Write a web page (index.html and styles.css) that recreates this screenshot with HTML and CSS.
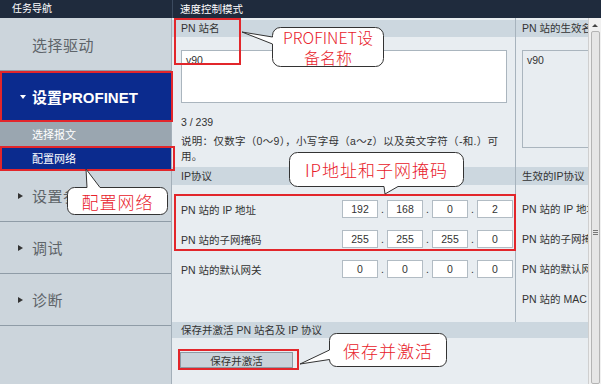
FILE: index.html
```html
<!DOCTYPE html>
<html lang="zh-CN">
<head>
    <meta charset="UTF-8">
    <title>设置PROFINET - 配置网络</title>
    <link rel="stylesheet" href="styles.css">
</head>
<body>
    <div class="topbar">
        <div class="topbar-nav">任务导航</div>
        <div class="topbar-mode">速度控制模式</div>
    </div>
    <div class="workspace">
        <nav class="sidebar">
            <div class="nav-item nav-first">选择驱动</div>
            <div class="nav-item nav-open"><span class="caret-down"></span>设置PROFINET</div>
            <div class="nav-sub">选择报文</div>
            <div class="nav-sub nav-sub-active">配置网络</div>
            <div class="nav-item nav-line"><span class="caret-right"></span>设置参数</div>
            <div class="nav-item nav-line"><span class="caret-right"></span>调试</div>
            <div class="nav-item nav-line"><span class="caret-right"></span>诊断</div>
        </nav>
        <main class="content">
            <div class="panels">
                <section class="panel-edit">
                    <div class="section-head">PN 站名</div>
                    <div class="name-box">v90</div>
                    <div class="count">3 / 239</div>
                    <div class="hint">说明：仅数字（0～9），小写字母（a～z）以及英文字符（-和.）可<br>用。</div>
                    <div class="section-head ip-head">IP协议</div>
                    <div class="ip-rows">
                        <div class="ip-row">
                            <span class="ip-label">PN 站的 IP 地址</span>
                            <div class="ip-fields">
                                <span class="ip-field">192</span><span class="ip-dot">.</span>
                                <span class="ip-field">168</span><span class="ip-dot">.</span>
                                <span class="ip-field">0</span><span class="ip-dot">.</span>
                                <span class="ip-field">2</span>
                            </div>
                        </div>
                        <div class="ip-row">
                            <span class="ip-label">PN 站的子网掩码</span>
                            <div class="ip-fields">
                                <span class="ip-field">255</span><span class="ip-dot">.</span>
                                <span class="ip-field">255</span><span class="ip-dot">.</span>
                                <span class="ip-field">255</span><span class="ip-dot">.</span>
                                <span class="ip-field">0</span>
                            </div>
                        </div>
                        <div class="ip-row">
                            <span class="ip-label">PN 站的默认网关</span>
                            <div class="ip-fields">
                                <span class="ip-field">0</span><span class="ip-dot">.</span>
                                <span class="ip-field">0</span><span class="ip-dot">.</span>
                                <span class="ip-field">0</span><span class="ip-dot">.</span>
                                <span class="ip-field">0</span>
                            </div>
                        </div>
                    </div>
                </section>
                <section class="panel-live">
                    <div class="section-head">PN 站的生效名称</div>
                    <div class="live-name">v90</div>
                    <div class="section-head live-head">生效的IP协议</div>
                    <div class="live-rows">
                        <div class="live-row">PN 站的 IP 地址</div>
                        <div class="live-row">PN 站的子网掩码</div>
                        <div class="live-row">PN 站的默认网关</div>
                        <div class="live-row">PN 站的 MAC 地址</div>
                    </div>
                </section>
            </div>
            <div class="save-head">保存并激活 PN 站名及 IP 协议</div>
            <button class="save-btn" type="button">保存并激活</button>
        </main>
        <div class="scrollbar">
            <div class="sb-arrow"></div>
            <div class="sb-thumb"><span class="sb-grip"></span></div>
        </div>
    </div>

    <svg class="marks" width="601" height="384" viewBox="0 0 601 384">
        <g fill="none" stroke="#e2262b" stroke-width="2">
            <rect x="175" y="19" width="65" height="45"/>
            <rect x="1" y="72" width="171" height="49"/>
            <rect x="1" y="147" width="173" height="23"/>
            <rect x="175" y="195" width="340" height="55"/>
            <rect x="179" y="350" width="119" height="19"/>
        </g>
        <g fill="#fff" stroke="#333" stroke-width="1">
            <path d="M280.5 27.5 H375.5 A8 8 0 0 1 383.5 35.5 V58.5 A8 8 0 0 1 375.5 66.5 H280.5 A8 8 0 0 1 272.5 58.5 V44 L242 32 L272.5 37 V35.5 A8 8 0 0 1 280.5 27.5 Z"/>
            <path d="M74.5 187.5 H87 L86 169 L100 187.5 H160.5 A7 7 0 0 1 167.5 194.5 V207.5 A7 7 0 0 1 160.5 214.5 H74.5 A7 7 0 0 1 67.5 207.5 V194.5 A7 7 0 0 1 74.5 187.5 Z"/>
            <path d="M297.5 152.5 H455.5 A8 8 0 0 1 463.5 160.5 V178.5 A8 8 0 0 1 455.5 186.5 H398 L385 194 L384 186.5 H297.5 A8 8 0 0 1 289.5 178.5 V160.5 A8 8 0 0 1 297.5 152.5 Z"/>
            <path d="M336.5 333.5 H439.5 A7 7 0 0 1 446.5 340.5 V359.5 A7 7 0 0 1 439.5 366.5 H336.5 A7 7 0 0 1 329.5 359.5 L300 364 L329.5 350 V340.5 A7 7 0 0 1 336.5 333.5 Z"/>
        </g>
    </svg>
    <div class="callout callout-name">PROFINET设<br>备名称</div>
    <div class="callout callout-nav">配置网络</div>
    <div class="callout callout-ip">IP地址和子网掩码</div>
    <div class="callout callout-save">保存并激活</div>
</body>
</html>
```

FILE: styles.css
```css
/* Page frame */
body {
    margin: 0;
    width: 601px;
    height: 384px;
    overflow: hidden;
    position: relative;
    font-family: "Liberation Sans", "Noto Sans CJK SC", sans-serif;
    font-size: 10.5px;
    color: #333;
    background: #e8edf1;
}

.topbar {
    display: flex;
    height: 18px;
    background: #1f2b3d;
    color: #fff;
}
.topbar-nav {
    width: 160px;
    padding-left: 12px;
    line-height: 18px;
    font-size: 10px;
}
.topbar-mode {
    flex: 1;
    padding-left: 7px;
    border-left: 1px solid #3b4a5f;
    line-height: 18px;
}

.workspace {
    display: flex;
    height: 366px;
}

/* Task navigation */
.sidebar {
    width: 171px;
    border-right: 1px solid #a3afb9;
    background: #ccd5dc;
}
.nav-item {
    height: 51px;
    display: flex;
    align-items: center;
    padding-left: 18px;
    font-size: 15px;
    letter-spacing: 0.5px;
    color: #5e6469;
}
.nav-first {
    height: 52px;
    padding-left: 32px;
    border-bottom: 1px solid #8f9ca7;
}
.nav-open {
    background: #0b2b8e;
    color: #fff;
    font-weight: bold;
    padding-left: 20px;
    letter-spacing: 0;
}
.nav-line {
    border-bottom: 1px solid #8f9ca7;
}
.nav-sub {
    height: 24px;
    display: flex;
    align-items: center;
    padding-left: 32px;
    font-size: 11px;
    color: #fff;
    background: #9aa6b0;
}
.nav-sub-active {
    background: #0b2b8e;
}
.caret-down {
    width: 0;
    height: 0;
    border-left: 3px solid transparent;
    border-right: 3px solid transparent;
    border-top: 4px solid #fff;
    margin-right: 6px;
}
.caret-right {
    width: 0;
    height: 0;
    border-top: 3.5px solid transparent;
    border-bottom: 3.5px solid transparent;
    border-left: 5px solid #333;
    margin-right: 9px;
}

/* Content */
.content {
    width: 416px;
    display: flex;
    flex-direction: column;
}
.panels {
    display: flex;
    height: 304px;
}
.panel-edit {
    width: 343px;
    border-right: 1px solid #a7b3bd;
    padding-top: 2px;
}
.panel-live {
    width: 72px;
    padding-top: 2px;
    overflow: hidden;
}
.section-head {
    height: 17px;
    line-height: 17px;
    padding-left: 9px;
    background: #ccd7df;
    white-space: nowrap;
}
.name-box {
    margin: 13px 8px 0 9px;
    height: 47px;
    border: 1px solid #aab5be;
    background: #fff;
    padding: 2px 4px;
    line-height: 15px;
}
.count {
    margin: 12px 0 0 9px;
    line-height: 15px;
}
.hint {
    margin: 4px 0 0 9px;
    line-height: 15px;
    white-space: nowrap;
    letter-spacing: 0.3px;
}
.ip-head {
    margin-top: 3px;
    height: 18px;
    line-height: 18px;
}
.ip-rows {
    margin-top: 9px;
}
.ip-row {
    display: flex;
    align-items: center;
    height: 30px;
    padding: 0 2px 0 9px;
}
.ip-label {
    flex: 1;
}
.ip-fields {
    display: flex;
    align-items: center;
}
.ip-field {
    width: 36px;
    height: 18px;
    box-sizing: border-box;
    border: 1px solid #b2bcc4;
    background: #fff;
    text-align: center;
    line-height: 16px;
}
.ip-dot {
    width: 9px;
    text-align: center;
}

.panel-live .section-head {
    padding-left: 6px;
}
.live-name {
    margin: 13px 0 0 6px;
    width: 80px;
    height: 92px;
    border: 1px solid #aab5be;
    padding: 2px 4px;
    line-height: 15px;
}
.live-head {
    margin-top: 19px;
    height: 18px;
    line-height: 18px;
}
.live-rows {
    margin-top: 9px;
}
.live-row {
    height: 30px;
    line-height: 30px;
    padding-left: 6px;
    white-space: nowrap;
}

.save-head {
    height: 16px;
    line-height: 16px;
    padding-left: 9px;
    background: #ccd7df;
}
.save-btn {
    align-self: flex-start;
    margin: 14px 0 0 8px;
    width: 113px;
    height: 16px;
    padding: 0;
    font: inherit;
    color: #333;
    border: 1px solid #8e9aa4;
    background: #c9d3da;
}

/* Scrollbar */
.scrollbar {
    width: 12px;
    border-left: 1px solid #cfcfcf;
    background: #f0f0f0;
    display: flex;
    flex-direction: column;
    align-items: center;
}
.sb-arrow {
    margin: 6px 0 4px;
    width: 0;
    height: 0;
    border-left: 3px solid transparent;
    border-right: 3px solid transparent;
    border-bottom: 3px solid #444;
}
.sb-thumb {
    flex: 1;
    width: 9px;
    box-sizing: border-box;
    border: 1px solid #b4b4b4;
    border-radius: 2px;
    background: #e6e6e6;
    display: flex;
    justify-content: center;
}
.sb-grip {
    margin-top: 198px;
    width: 5px;
    height: 5px;
    border-top: 1px solid #777;
    border-bottom: 1px solid #777;
    box-sizing: border-box;
    position: relative;
}
.sb-grip::after {
    content: "";
    position: absolute;
    left: 0;
    right: 0;
    top: 1px;
    border-top: 1px solid #777;
}

/* Annotations over the screenshot */
.marks {
    position: absolute;
    left: 0;
    top: 0;
}
.callout {
    position: absolute;
    display: flex;
    align-items: center;
    justify-content: center;
    text-align: center;
    font-family: "Noto Sans CJK SC", "Liberation Sans", sans-serif;
    font-weight: 300;
    font-size: 17px;
    letter-spacing: 1px;
    color: #e8202a;
}
.callout-name {
    left: 272px;
    top: 27px;
    width: 112px;
    height: 40px;
    font-size: 16px;
    line-height: 20px;
    letter-spacing: 0;
}
.callout-nav {
    left: 67px;
    top: 187px;
    width: 101px;
    height: 28px;
}
.callout-ip {
    left: 289px;
    top: 152px;
    width: 175px;
    height: 35px;
}
.callout-save {
    left: 329px;
    top: 333px;
    width: 118px;
    height: 34px;
}
```
